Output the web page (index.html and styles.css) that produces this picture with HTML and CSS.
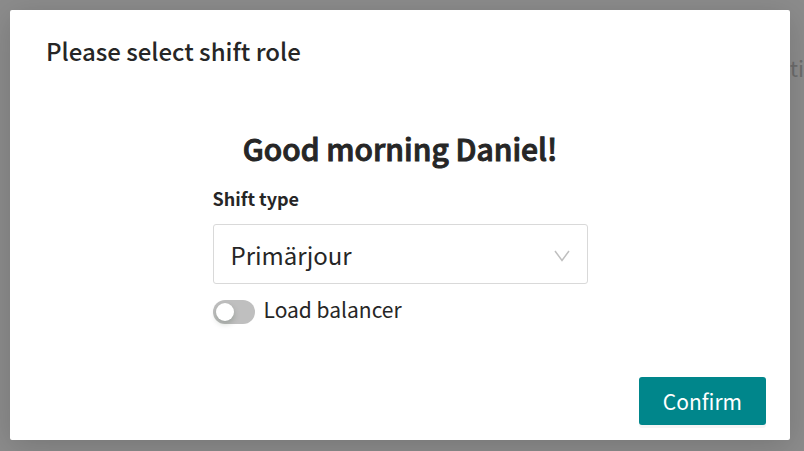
FILE: index.html
```html
<!DOCTYPE html>
<html lang="en">
<head>
<meta charset="utf-8">
<title>Select shift role</title>
<link rel="stylesheet" href="styles.css">
</head>
<body>
<div class="page"><span class="page-label">ti</span></div>
<div class="overlay">
  <form class="modal" role="dialog" aria-labelledby="modal-title">
    <h1 class="modal-title" id="modal-title">Please select shift role</h1>
    <div class="modal-body">
      <h2 class="greeting">Good morning Daniel!</h2>
      <label class="field-label" for="shift-type">Shift type</label>
      <div class="select">
        <select id="shift-type"><option>Primärjour</option></select>
        <svg class="select-arrow" viewBox="0 0 16 12" aria-hidden="true"><path d="M1 1 L8 10.4 L15 1"/></svg>
      </div>
      <label class="switch">
        <input type="checkbox" role="switch">
        <span>Load balancer</span>
      </label>
    </div>
    <div class="modal-footer">
      <button class="confirm" type="button">Confirm</button>
    </div>
  </form>
</div>
</body>
</html>
```
FILE: styles.css
```css
* {
  box-sizing: border-box;
}

body {
  margin: 0;
  min-height: 100vh;
  overflow: hidden;
  background: #8c8c8c;
  color: #262626;
  font-family: "Noto Sans CJK SC", "Noto Sans", sans-serif;
}

.page {
  display: flex;
  justify-content: flex-end;
  padding-top: 52px;
}

.page-label {
  color: #6c6c6c;
  font-size: 22px;
  line-height: 30px;
}

.overlay {
  position: absolute;
  inset: 0;
  display: flex;
  padding: 10px 14px 11px 10px;
}

.modal {
  flex: 1;
  display: flex;
  flex-direction: column;
  padding: 24px 24px 15px;
  border-radius: 2px;
  background: #fff;
  box-shadow: 0 6px 32px rgba(0, 0, 0, 0.16);
}

.modal-title {
  margin: 0;
  padding-left: 12px;
  font-size: 24px;
  font-weight: 500;
  line-height: 34px;
}

.modal-body {
  display: flex;
  flex-direction: column;
  width: 100%;
  max-width: 375px;
  margin: 56px auto 0;
}

.greeting {
  margin: 0;
  font-size: 30px;
  font-weight: 500;
  line-height: 48px;
  text-align: center;
  -webkit-text-stroke: 1px currentColor;
}

.field-label {
  margin-top: 12px;
  font-size: 18px;
  font-weight: 700;
  line-height: 28px;
}

.select {
  display: grid;
  align-items: center;
  margin-top: 12px;
}

.select select {
  grid-area: 1 / 1;
  width: 100%;
  height: 60px;
  padding: 0 44px 0 17px;
  border: 1px solid #d9d9d9;
  border-radius: 3px;
  appearance: none;
  background: #fff;
  color: inherit;
  font-family: inherit;
  font-size: 24px;
  font-weight: 400;
}

.select-arrow {
  grid-area: 1 / 1;
  justify-self: end;
  width: 16px;
  height: 12px;
  margin: 4px 18px 0 0;
  fill: none;
  stroke: #bfbfbf;
  stroke-width: 1.5;
  pointer-events: none;
}

.switch {
  display: flex;
  align-items: flex-end;
  align-self: flex-start;
  gap: 9px;
  margin-top: 10px;
  font-size: 21px;
  line-height: 30px;
}

.switch input {
  display: flex;
  align-items: center;
  width: 42px;
  height: 24px;
  margin: 0;
  padding: 3px;
  border-radius: 12px;
  appearance: none;
  background: #bfbfbf;
}

.switch input::before {
  content: "";
  width: 18px;
  height: 18px;
  border-radius: 50%;
  background: #fff;
  box-shadow: 0 3px 6px rgba(0, 35, 11, 0.2);
}

.switch input:checked::before {
  margin-left: auto;
}

.modal-footer {
  display: flex;
  justify-content: flex-end;
  margin-top: auto;
}

.confirm {
  height: 48px;
  padding: 0 24px;
  border: 0;
  border-radius: 3px;
  background: #00868b;
  color: #fff;
  box-shadow: 0 3px 0 rgba(0, 0, 0, 0.04);
  font-family: inherit;
  font-size: 21px;
  font-weight: 400;
}
```
